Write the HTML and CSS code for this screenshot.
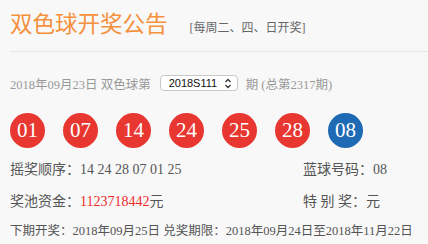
FILE: index.html
```html
<!DOCTYPE html>
<html lang="zh-CN">
<head>
  <meta charset="UTF-8">
  <title>双色球开奖公告</title>
  <meta name="viewport" content="width=device-width, initial-scale=1.0">
  <link rel="stylesheet" href="styles.css">
</head>
<body>

  <div class="header">
    <h1>双色球开奖公告</h1>
    <span class="schedule">[每周二、四、日开奖]</span>
  </div>

  <div class="issue">
    <span>2018年09月23日 双色球第</span>
    <div class="select">
      <span>2018S111</span>
      <svg width="8" height="11" viewBox="0 0 8 11">
        <path d="M1.5 4 L4 1.5 L6.5 4 M1.5 7 L4 9.5 L6.5 7" fill="none" stroke="#333" stroke-width="1.3"/>
      </svg>
    </div>
    <span>期 (总第2317期)</span>
  </div>

  <div class="balls">
    <span class="ball red">01</span>
    <span class="ball red">07</span>
    <span class="ball red">14</span>
    <span class="ball red">24</span>
    <span class="ball red">25</span>
    <span class="ball red">28</span>
    <span class="ball blue">08</span>
  </div>

  <div class="info-row">
    <span class="info-left">摇奖顺序：14 24 28 07 01 25</span>
    <span>蓝球号码：08</span>
  </div>
  <div class="info-row">
    <span class="info-left">奖池资金：<em class="money">1123718442</em>元</span>
    <span>特 别 奖：元</span>
  </div>

  <div class="footer">下期开奖：2018年09月25日 兑奖期限：2018年09月24日至2018年11月22日</div>

</body>
</html>
```

FILE: styles.css
```css
body {
  margin: 0;
  padding: 0 0 0 10px;
  background: #f8f8f8;
  color: #555;
  font-family: 'Liberation Serif', 'Noto Sans CJK SC', serif;
}

.header {
  display: flex;
  align-items: baseline;
  gap: 22px;
  height: 52px;
  box-sizing: border-box;
  padding-top: 7px;
  border-bottom: 1px solid #e6e6e6;
}

.header h1 {
  margin: 0;
  font-family: 'Noto Sans CJK SC', sans-serif;
  font-size: 22.5px;
  font-weight: normal;
  line-height: 30px;
  color: #f5903d;
}

.schedule {
  font-size: 12px;
  color: #666;
}

.issue {
  display: flex;
  align-items: center;
  margin-top: 21px;
  height: 20px;
  font-size: 12.5px;
  color: #999;
}

.select {
  display: flex;
  align-items: center;
  justify-content: space-between;
  width: 78px;
  height: 16px;
  box-sizing: border-box;
  margin: 0 8px 0 9px;
  padding: 0 5px 0 8px;
  background: #fff;
  border: 1px solid #c8c8c8;
  border-radius: 4px;
  font-family: 'Liberation Sans', sans-serif;
  font-size: 11px;
  color: #111;
}

.balls {
  display: flex;
  gap: 18px;
  margin-top: 20px;
}

.ball {
  width: 35px;
  height: 35px;
  border-radius: 50%;
  display: flex;
  align-items: center;
  justify-content: center;
  color: #fff;
  font-size: 21px;
}

.ball.red {
  background: #e83731;
}

.ball.blue {
  background: #1f6ab4;
}

.info-row {
  display: flex;
  margin-top: 12px;
  line-height: 20px;
  font-size: 14px;
}

.info-left {
  width: 293px;
}

.money {
  font-style: normal;
  color: #ee2a2a;
}

.footer {
  margin-top: 10px;
  line-height: 18px;
  font-size: 12.5px;
}
```
